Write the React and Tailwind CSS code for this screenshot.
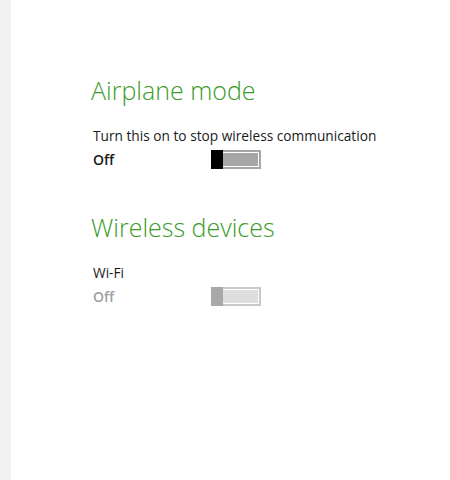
import React from "react";

function Toggle({ dim }) {
  return (
    <div className="flex h-[19px] w-[50px]">
      <div className={dim ? "w-[12px] bg-[#a8a8a8]" : "w-[12px] bg-black"} />
      <div
        className={
          dim
            ? "flex-1 bg-[#c9c9c9] py-[2px] pr-[2px]"
            : "flex-1 bg-[#a6a6a6] py-[2px] pr-[2px]"
        }
      >
        <div
          className={
            dim
              ? "h-full border border-l-0 border-white bg-[#dedede]"
              : "h-full border border-l-0 border-white bg-[#a6a6a6]"
          }
        />
      </div>
    </div>
  );
}

function Section({ title, label, dim }) {
  return (
    <div>
      <h2 className="text-[25px] font-light leading-[32px] text-[#3a9c28]">
        {title}
      </h2>
      <div className="ml-[2px] mt-[20px] text-[13.7px] leading-[19px] text-[#1a1a1a]">
        {label}
      </div>
      <div className="ml-[2px] mt-[4px] flex items-center">
        <div
          className={
            dim
              ? "w-[118px] text-[14px] font-semibold text-[#a0a0a0]"
              : "w-[118px] text-[14px] font-semibold text-[#1a1a1a]"
          }
        >
          Off
        </div>
        <Toggle dim={dim} />
      </div>
    </div>
  );
}

export default function App() {
  return (
    <div
      className="flex h-[480px] w-[450px] bg-white"
      style={{ fontFamily: '"Open Sans", "Noto Sans", sans-serif' }}
    >
      <div className="w-[11px] bg-[#f2f2f2]" />
      <div className="flex flex-col gap-[41px] pl-[80px] pt-[74px]">
        <Section
          title="Airplane mode"
          label="Turn this on to stop wireless communication"
        />
        <Section title="Wireless devices" label="Wi-Fi" dim />
      </div>
    </div>
  );
}
